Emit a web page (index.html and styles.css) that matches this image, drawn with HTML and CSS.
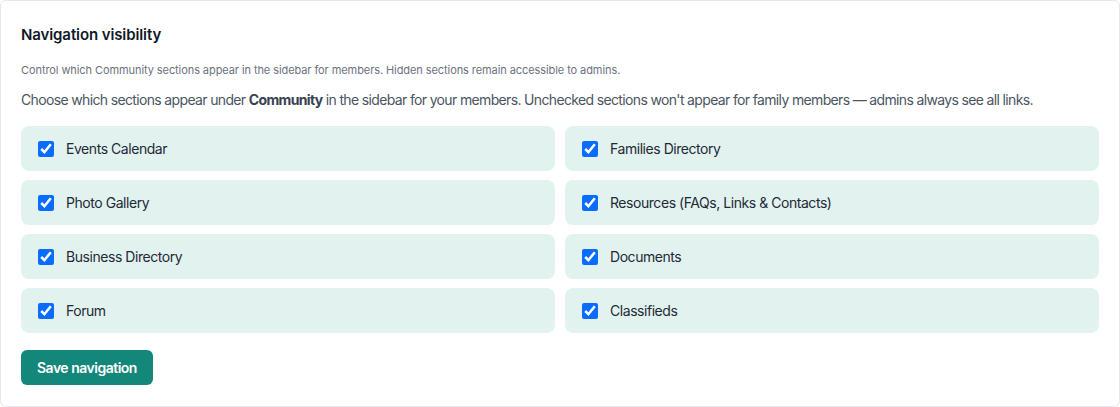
FILE: index.html
```html
<!DOCTYPE html>
<html lang="en">
<head>
    <meta charset="UTF-8">
    <meta name="viewport" content="width=device-width, initial-scale=1.0">
    <title>Navigation visibility</title>
    <link rel="stylesheet" href="styles.css">
</head>
<body>
    <div class="card">
        <h2 class="card-title">Navigation visibility</h2>
        <p class="card-sub">Control which Community sections appear in the sidebar for members. Hidden sections remain accessible to admins.</p>
        <p class="card-desc">Choose which sections appear under <strong>Community</strong> in the sidebar for your members. Unchecked sections won't appear for family members — admins always see all links.</p>

        <div class="nav-grid">
            <label class="nav-item"><input type="checkbox" checked> Events Calendar</label>
            <label class="nav-item"><input type="checkbox" checked> Families Directory</label>
            <label class="nav-item"><input type="checkbox" checked> Photo Gallery</label>
            <label class="nav-item"><input type="checkbox" checked> Resources (FAQs, Links &amp; Contacts)</label>
            <label class="nav-item"><input type="checkbox" checked> Business Directory</label>
            <label class="nav-item"><input type="checkbox" checked> Documents</label>
            <label class="nav-item"><input type="checkbox" checked> Forum</label>
            <label class="nav-item"><input type="checkbox" checked> Classifieds</label>
        </div>

        <button class="btn-save">Save navigation</button>
    </div>
</body>
</html>
```

FILE: styles.css
```css
body {
    margin: 0;
    font-family: Inter, "Noto Sans", sans-serif;
    color: #1f2937;
    background: #fff;
}
.card {
    border: 1px solid #e5e7eb;
    border-radius: 6px;
    padding: 20px;
    height: 407px;
    box-sizing: border-box;
}
.card-title {
    margin: 0;
    font-size: 15px;
    font-weight: 600;
    line-height: 28px;
    letter-spacing: -0.1px;
    color: #111827;
}
.card-sub {
    margin: 13px 0 0;
    font-size: 11px;
    line-height: 16px;
    letter-spacing: -0.08px;
    color: #6b7280;
}
.card-desc {
    margin: 12px 0 0;
    font-size: 14px;
    line-height: 20px;
    letter-spacing: -0.65px;
    color: #4b5563;
    white-space: nowrap;
}
.card-desc strong {
    color: #374151;
    font-weight: 700;
}
.nav-grid {
    display: grid;
    grid-template-columns: 1fr 1fr;
    column-gap: 10px;
    row-gap: 9px;
    margin-top: 16px;
}
.nav-item {
    display: flex;
    align-items: center;
    gap: 12px;
    height: 45px;
    padding: 0 17px;
    background: #e2f3ef;
    border-radius: 8px;
    font-size: 14px;
    letter-spacing: -0.45px;
    color: #1f2937;
    cursor: pointer;
}
.nav-item input {
    width: 16px;
    height: 16px;
    margin: 0;
    accent-color: #0a6cff;
}
.btn-save {
    margin-top: 17px;
    height: 35px;
    padding: 0 16px;
    border: none;
    border-radius: 6px;
    background: #13877a;
    color: #fff;
    font-family: inherit;
    font-size: 14px;
    font-weight: 600;
    letter-spacing: -0.5px;
    cursor: pointer;
}
.btn-save:hover {
    background: #0f766e;
}
```
